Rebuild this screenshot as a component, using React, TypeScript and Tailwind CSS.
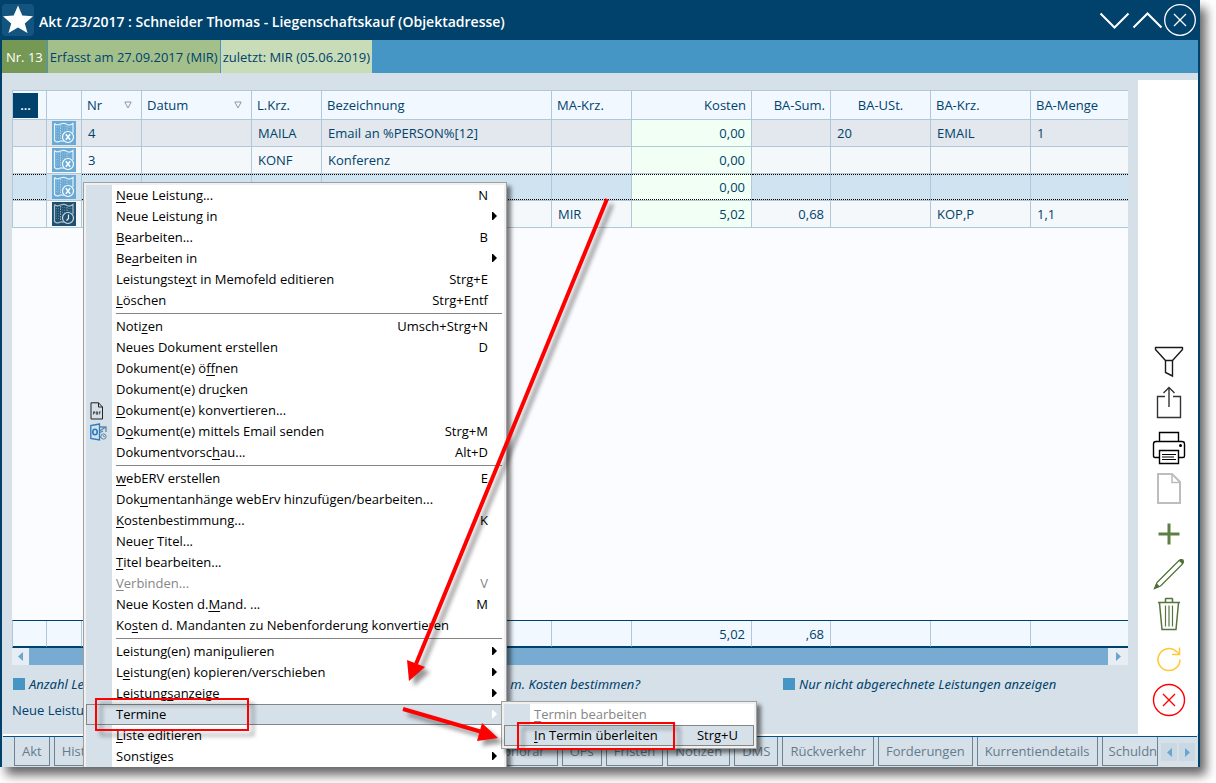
import type { ReactNode } from "react";
import { clsx } from "clsx";

interface MenuEntry {
  label: string;
  // index of the letter that is underlined as access key
  hot?: number;
  keys?: string;
  sub?: boolean;
  disabled?: boolean;
  active?: boolean;
  icon?: ReactNode;
}

interface Row {
  nr: string;
  krz: string;
  text: string;
  ma: string;
  kosten: string;
  sum: string;
  ust: string;
  baKrz: string;
  menge: string;
  bg: string;
  selected?: boolean;
  timed?: boolean;
}

const rows: Row[] = [
  { nr: "4", krz: "MAILA", text: "Email an %PERSON%[12]", ma: "", kosten: "0,00", sum: "", ust: "20", baKrz: "EMAIL", menge: "1", bg: "bg-[#e2e8ee]" },
  { nr: "3", krz: "KONF", text: "Konferenz", ma: "", kosten: "0,00", sum: "", ust: "", baKrz: "", menge: "", bg: "bg-[#f4f8fb]" },
  { nr: "", krz: "", text: "", ma: "", kosten: "0,00", sum: "", ust: "", baKrz: "", menge: "", bg: "bg-[#d0e3f1]", selected: true },
  { nr: "", krz: "", text: "", ma: "MIR", kosten: "5,02", sum: "0,68", ust: "", baKrz: "KOP,P", menge: "1,1", bg: "bg-[#f4f8fb]", timed: true },
];

const PdfIcon = () => (
  <svg width="14" height="18" viewBox="0 0 14 18" fill="none" stroke="#222">
    <path d="M1 .8H8.5L12.5 5V17H1Z" />
    <path d="M8.5 .8V5H12.5" />
    <path d="M3.5 12.500V9.800H4.800V11H3.500M6.300 9.800V12.300H7.500V9.800ZM9.300 12.500V9.800H10.800M9.300 11H10.300" strokeWidth=".7" />
  </svg>
);

const OutlookIcon = () => (
  <svg width="17" height="18" viewBox="0 0 17 18" fill="none" stroke="#2b7bbd" strokeWidth="1.3">
    <path d="M9.5 1L.8 2.5V15.5L9.5 17Z" />
    <ellipse cx="5" cy="9" rx="2.2" ry="2.8" strokeWidth="1.6" />
    <path d="M9.5 4H16V9M9.5 8L16 4M9.5 14H11M10 9.5L13 8" stroke="#5c87aa" />
    <circle cx="13.5" cy="13.5" r="2.6" stroke="#5c87aa" strokeWidth="1" />
    <path d="M13.5 12V13.5H15" stroke="#5c87aa" strokeWidth=".8" />
  </svg>
);

const groups: MenuEntry[][] = [
  [
    { label: "Neue Leistung...", hot: 0, keys: "N" },
    { label: "Neue Leistung in", sub: true },
    { label: "Bearbeiten...", hot: 0, keys: "B" },
    { label: "Bearbeiten in", hot: 2, sub: true },
    { label: "Leistungstext in Memofeld editieren", hot: 11, keys: "Strg+E" },
    { label: "Löschen", hot: 0, keys: "Strg+Entf" },
  ],
  [
    { label: "Notizen", hot: 4, keys: "Umsch+Strg+N" },
    { label: "Neues Dokument erstellen", keys: "D" },
    { label: "Dokument(e) öffnen", hot: 13 },
    { label: "Dokument(e) drucken", hot: 15 },
    { label: "Dokument(e) konvertieren...", hot: 0, icon: <PdfIcon /> },
    { label: "Dokument(e) mittels Email senden", hot: 1, keys: "Strg+M", icon: <OutlookIcon /> },
    { label: "Dokumentvorschau...", hot: 13, keys: "Alt+D" },
  ],
  [
    { label: "webERV erstellen", hot: 0, keys: "E" },
    { label: "Dokumentanhänge webErv hinzufügen/bearbeiten...", hot: 3 },
    { label: "Kostenbestimmung...", hot: 0, keys: "K" },
    { label: "Neuer Titel...", hot: 4 },
    { label: "Titel bearbeiten...", hot: 0 },
    { label: "Verbinden...", hot: 0, keys: "V", disabled: true },
    { label: "Neue Kosten d.Mand. ...", hot: 14, keys: "M" },
    { label: "Kosten d. Mandanten zu Nebenforderung konvertieren", hot: 2 },
  ],
  [
    { label: "Leistung(en) manipulieren", hot: 17, sub: true },
    { label: "Leistung(en) kopieren/verschieben", hot: 1, sub: true },
    { label: "Leistungsanzeige", hot: 8, sub: true },
    { label: "Termine", sub: true, active: true },
    { label: "Liste editieren", hot: 0 },
    { label: "Sonstiges", hot: 6, sub: true },
  ],
];

const submenu: MenuEntry[][] = [
  [
    { label: "Termin bearbeiten", hot: 0, disabled: true },
    { label: "In Termin überleiten", hot: 0, keys: "Strg+U", active: true },
  ],
];

const lateTabs = ["OPs", "Fristen", "Notizen", "DMS", "Rückverkehr", "Forderungen", "Kurrentiendetails"];

function Label({ text, hot }: { text: string; hot?: number }) {
  if (hot === undefined) return <>{text}</>;
  return (
    <>
      {text.slice(0, hot)}
      <span className="underline underline-offset-2">{text[hot]}</span>
      {text.slice(hot + 1)}
    </>
  );
}

function Menu({ entries, className }: { entries: MenuEntry[][]; className: string }) {
  return (
    <div
      role="menu"
      className={clsx(
        "absolute border border-[#a0a0a0] bg-[#f0f0f0] p-0.5 text-black shadow-[4px_4px_4px_rgba(0,0,0,0.5)]",
        className,
      )}
    >
      <div className="bg-[linear-gradient(90deg,#d5e0e9_26px,#fff_26px)]">
        {entries.map((group, g) => (
          <div key={g}>
            {g > 0 && (
              <div role="separator" className="h-[5px] pt-0.5 pr-0.5 pl-[30px]">
                <div className="h-px bg-[#868686]" />
              </div>
            )}
            {group.map((e) => (
              <button
                key={e.label}
                type="button"
                role="menuitem"
                disabled={e.disabled}
                className={clsx(
                  "flex h-[21px] w-full items-center border pr-[6px] pb-0.5 text-left whitespace-nowrap",
                  e.active ? "border-[#868686] bg-[#d5e0e9]" : "border-transparent",
                  e.disabled && "text-[#868686]",
                )}
              >
                <span className="flex w-[29px] shrink-0 pt-0.5 pl-[3px]">{e.icon}</span>
                <span className="flex-1">
                  <Label text={e.label} hot={e.hot} />
                </span>
                <span>{e.keys}</span>
                <span className="flex w-[9px] shrink-0 justify-end">
                  {e.sub && (
                    <svg width="5" height="8" viewBox="0 0 5 8" fill={e.active ? "#fff" : "#000"}>
                      <path d="M0 0H1L5 4L1 8H0Z" />
                    </svg>
                  )}
                </span>
              </button>
            ))}
          </div>
        ))}
      </div>
    </div>
  );
}

function Columns() {
  return (
    <colgroup>
      <col className="w-[34px]" />
      <col className="w-[35px]" />
      <col className="w-[60px]" />
      <col className="w-[110px]" />
      <col className="w-[70px]" />
      <col className="w-[230px]" />
      <col className="w-[80px]" />
      <col className="w-[120px]" />
      <col className="w-[79px]" />
      <col className="w-[100px]" />
      <col className="w-[100px]" />
      <col />
    </colgroup>
  );
}

function Head({ children, align = "text-left", sort }: { children?: ReactNode; align?: string; sort?: boolean }) {
  return (
    <th className={clsx("h-[30px] border-y border-r border-[#b0c8d8] bg-[#f1f8ff] px-[5px] py-0 font-normal last:border-r-0", align)}>
      {sort ? (
        <span className="flex items-center justify-between pr-1">
          {children}
          <svg width="8" height="8" viewBox="0 0 8 8" fill="none" stroke="#8f9ba5">
            <path d="M.8 1H7.2L4 7Z" />
          </svg>
        </span>
      ) : (
        children
      )}
    </th>
  );
}

function Cell({ row, children, right, green }: { row: Row; children?: ReactNode; right?: boolean; green?: boolean }) {
  return (
    <td className={clsx("border-r border-b border-[#b0c8d8] p-0 last:border-r-0", green ? "bg-[#f1fff5]" : row.bg)}>
      <div
        className={clsx(
          "flex h-[26px] items-center border-y px-[6px]",
          right && "justify-end",
          row.selected ? "border-dotted border-black" : "border-transparent",
        )}
      >
        {children}
      </div>
    </td>
  );
}

function MapIcon({ timed }: { timed?: boolean }) {
  return (
    <svg width="24" height="24" viewBox="0 0 24 24" fill="none" className={timed ? "bg-[#21506f]" : "bg-[#6aaad4]"}>
      <path
        d="M2.5 2.5Q5 5 8.500 3Q12 1.500 15 3.500Q18 5 21 2.500V12M2.500 2.500V19.500Q5 22 8.500 20Q10 19.500 11.500 20.500"
        stroke="#e3f0f9"
        strokeWidth="1.2"
        strokeOpacity={timed ? 0.7 : 1}
      />
      <path d="M8.500 4V19M15 5V10" stroke="#e3f0f9" strokeDasharray="1.500 1" strokeOpacity=".6" />
      <path d="M4.500 6V18M6.500 6V18M10.500 5V17M12.500 5V11M17 6V10M19 6V10" stroke="#e3f0f9" strokeDasharray="1 1.500" strokeOpacity=".3" />
      <circle cx="16" cy="16" r="5.500" stroke="#fff" strokeWidth="1.200" fill={timed ? "#21506f" : "#6aaad4"} strokeOpacity={timed ? 0.8 : 1} />
      {timed ? (
        <path d="M16.500 12.500V16.500L14.500 18.500" stroke="#e3f0f9" strokeWidth="1.200" />
      ) : (
        <path d="M13.800 13.300L18.200 18.700M18.200 13.300L13.800 18.700" stroke="#fff" strokeWidth="1.500" />
      )}
    </svg>
  );
}

function Tool({ label, stroke = "#1a1a1a", width = 1.4, children }: { label: string; stroke?: string; width?: number; children: ReactNode }) {
  return (
    <button type="button" aria-label={label} className="h-[42px]">
      <svg width="34" height="42" viewBox="0 0 34 42" fill="none" stroke={stroke} strokeWidth={width}>
        {children}
      </svg>
    </button>
  );
}

function Toolbar() {
  return (
    <div className="mt-[7px] flex w-[60px] shrink-0 flex-col items-center justify-end bg-white pr-px pb-[13px] pl-[3px]">
      <Tool label="Filter">
        <path d="M3.500 4.500H30.500V6.500L20.500 17.500H13.500L3.500 6.500Z" strokeLinejoin="round" />
        <path d="M13.500 17.500V29.500L20.500 33V17.500" />
      </Tool>
      <Tool label="Exportieren" stroke="#333">
        <path d="M13 11.500H5.500V32.500H28.500V11.500H21" />
        <path d="M17 2.500V22M11.500 8L17 2.500L22.500 8" />
      </Tool>
      <Tool label="Drucken" stroke="#000">
        <path d="M7.500 14.500V5.500H26.500V14.500" />
        <path d="M7.500 30.500H3Q1.500 30.500 1.500 29V17Q1.500 14.500 4 14.500H30Q32.500 14.500 32.500 17V29Q32.500 30.500 31 30.500H26.500" />
        <path d="M7.500 23.500H26.500V36.500H7.500Z" />
        <path d="M10 27.500H24M10 30H22M10 32.500H24" strokeWidth="1.200" />
        <circle cx="28.500" cy="18.500" r=".8" fill="#000" />
      </Tool>
      <Tool label="Neues Dokument" stroke="#bdbdbd" width={2}>
        <path d="M6 5H20L28 13V34H6Z" />
        <path d="M20 5V13.500H28" strokeWidth="1.600" />
      </Tool>
      <Tool label="Hinzufügen" stroke="#5f7f42" width={3}>
        <path d="M17 12.500V33.500M6.500 23H27.500" />
      </Tool>
      <Tool label="Bearbeiten" stroke="#4f7237" width={1.2}>
        <path d="M3 35L5 29.500L27 7.500Q29 6 30.500 7.500Q32 9 30.500 11L8.500 33Z" strokeLinejoin="round" />
        <path d="M2.500 35.500L4.500 31L7 33.500ZM27.500 7.500Q29 6 31 7Q32 9 30.500 10.500Z" fill="#4f7237" />
      </Tool>
      <Tool label="Löschen" stroke="#56753c" width={1.5}>
        <path d="M6 7.500H28M13.500 7V4Q13.500 3.500 14 3.500H20Q20.500 3.500 20.500 4V7" />
        <path d="M7.500 8L10 34.500H24L26.500 8" />
        <path d="M13.500 10.500V31.500M17 10.500V31.500M20.500 10.500V31.500" strokeWidth="1.200" />
      </Tool>
      <Tool label="Aktualisieren" stroke="#ffc730" width={1.5}>
        <path d="M28 22.500A11 11 0 1 1 24.500 14.500L27.500 17" />
        <path d="M27.500 10.500V17.500H20" />
      </Tool>
      <Tool label="Schließen" stroke="#ff0000" width={1.4}>
        <circle cx="17" cy="21" r="15.500" />
        <path d="M11 15L23 27M23 15L11 27" />
      </Tool>
    </div>
  );
}

function TitleBar() {
  return (
    <header className="flex h-10 shrink-0 items-center bg-[#00426b] pr-0.5 text-white">
      <svg width="32" height="32" viewBox="0 0 32 32">
        <rect width="32" height="32" rx="4" fill="#14557f" />
        <path d="M16 1.500L20.300 11.500L31 12.200L22.800 19.400L25.500 29L16 23.500L6.500 29L9.200 19.400L1 12.200L11.700 11.500Z" fill="#fff" />
      </svg>
      <h1 className="ml-[5px] flex-1 pt-1 text-sm font-semibold whitespace-nowrap">
        Akt /23/2017 : Schneider Thomas - Liegenschaftskauf (Objektadresse)
      </h1>
      <div className="flex items-center">
        <button type="button" aria-label="Nach unten">
          <svg width="33" height="32" viewBox="0 0 33 32" fill="none" stroke="#fff" strokeWidth="2">
            <path d="M2.500 9.500L16.500 23.500L30.500 9.500" />
          </svg>
        </button>
        <button type="button" aria-label="Nach oben">
          <svg width="33" height="32" viewBox="0 0 33 32" fill="none" stroke="#fff" strokeWidth="2">
            <path d="M2.500 23.500L16.500 9.500L30.500 23.500" />
          </svg>
        </button>
        <button type="button" aria-label="Fenster schließen">
          <svg width="32" height="32" viewBox="0 0 32 32" fill="none" stroke="#fff" strokeWidth="1.300">
            <circle cx="16" cy="16" r="15.300" />
            <path d="M10 10L22 22M22 10L10 22" />
          </svg>
        </button>
      </div>
    </header>
  );
}

function Option({ label, children }: { label?: string; children?: ReactNode }) {
  return (
    <label className="flex items-center gap-1 overflow-hidden font-['Noto_Sans',sans-serif] whitespace-nowrap italic">
      <input type="checkbox" className="size-3 shrink-0 appearance-none bg-[#4595c5]" />
      {label}
      {children}
    </label>
  );
}

function ScrollButton({ left, className }: { left?: boolean; className: string }) {
  return (
    <button type="button" aria-label={left ? "Zurück" : "Weiter"} className={clsx("flex shrink-0 items-center justify-center", className)}>
      <svg width="5" height="9" viewBox="0 0 5 9" fill="#6aa5cf">
        <path d={left ? "M5 0V9L0 4.500Z" : "M0 0V9L5 4.500Z"} />
      </svg>
    </button>
  );
}

const tabClass = "h-[29px] shrink-0 border-x border-b border-[#6b8393] px-[7px] text-[#657b8b]";

function Tabs() {
  return (
    <nav className="mx-px flex h-[33px] shrink-0 border-t-2 border-white">
      <div className="flex min-w-0 flex-1 border-t border-[#005288] pl-[11px]">
        <div className="flex min-w-0 flex-1 gap-1">
          <button type="button" className={tabClass}>Akt</button>
          <div className="flex w-[504px] shrink-0 justify-between">
            <button type="button" className={tabClass}>Hist</button>
            <button type="button" className={clsx(tabClass, "pr-3")}>Honorar</button>
          </div>
          {lateTabs.map((t) => (
            <button key={t} type="button" className={tabClass}>
              {t}
            </button>
          ))}
          <button
            type="button"
            className="h-[29px] min-w-0 flex-1 border-x border-b border-[#6b8393] pl-1.5 text-left whitespace-nowrap text-[#657b8b]"
          >
            Schuldn
          </button>
        </div>
        <div className="flex items-center gap-0.5 pr-0.5 pl-[3px]">
          <ScrollButton left className="h-[18px] w-4 bg-[#cad8e3]" />
          <ScrollButton className="h-[18px] w-4 bg-[#cad8e3]" />
        </div>
      </div>
    </nav>
  );
}

function Annotations() {
  return (
    <svg className="pointer-events-none absolute inset-0 h-full w-full drop-shadow-[5px_5px_2px_rgba(0,0,0,0.4)]" fill="none" stroke="#f00">
      <path d="M605 199L414 664" strokeWidth="4" />
      <path d="M405 660L423 667L407 681Z" fill="#f00" stroke="none" />
      <path d="M401 709L480 732" strokeWidth="4" />
      <path d="M480 723L475 741L496 738Z" fill="#f00" stroke="none" />
      <rect x="94" y="699" width="152" height="31" strokeWidth="2" />
      <rect x="516" y="723" width="156" height="26" strokeWidth="2" />
    </svg>
  );
}

export default function App() {
  return (
    <div className="flex h-screen min-h-[640px] overflow-hidden bg-white pr-4 pb-4 font-['Open_Sans',sans-serif] text-[13px] leading-[18px] text-[#00426b]">
      <div className="relative flex min-w-0 flex-1 flex-col overflow-hidden border-x-2 border-[#00426b] bg-[#d5e0e9] shadow-[6px_8px_10px_rgba(0,0,0,0.6)]">
        <TitleBar />

        <div className="flex h-[33px] shrink-0 gap-px bg-[#4595c5] whitespace-nowrap">
          <span className="flex items-center bg-[#759955] px-1 text-white">Nr. 13</span>
          <span className="flex items-center bg-[#a3c08b] px-0.5">Erfasst am 27.09.2017 (MIR)</span>
          <span className="flex items-center bg-[#c8dcb8] px-0.5">zuletzt: MIR (05.06.2019)</span>
        </div>

        <div className="flex min-h-0 flex-1">
          <main className="flex min-w-0 flex-1 flex-col pt-[17px] pr-2.5 pb-[15px] pl-2.5">
            <div className="flex min-h-0 flex-1 flex-col overflow-hidden bg-[#fbfcff]">
              <table className="w-full table-fixed border-separate border-spacing-0 border-l border-[#b0c8d8]">
                <Columns />
                <thead>
                  <tr>
                    <th className="border-y border-r border-[#b0c8d8] bg-[#f1f8ff] p-0">
                      <button type="button" className="block size-[25px] bg-[#00426b] font-semibold text-white">
                        ...
                      </button>
                    </th>
                    <Head />
                    <Head sort>Nr</Head>
                    <Head sort>Datum</Head>
                    <Head>L.Krz.</Head>
                    <Head>Bezeichnung</Head>
                    <Head>MA-Krz.</Head>
                    <Head align="text-right">Kosten</Head>
                    <Head align="text-right">BA-Sum.</Head>
                    <Head align="text-center">BA-USt.</Head>
                    <Head>BA-Krz.</Head>
                    <Head>BA-Menge</Head>
                  </tr>
                </thead>
                <tbody>
                  {rows.map((row, i) => (
                    <tr key={i}>
                      <Cell row={row} />
                      <td className={clsx("border-r border-b border-[#b0c8d8] p-0", row.bg)}>
                        <div className="flex justify-center">
                          <MapIcon timed={row.timed} />
                        </div>
                      </td>
                      <Cell row={row}>{row.nr}</Cell>
                      <Cell row={row} />
                      <Cell row={row}>{row.krz}</Cell>
                      <Cell row={row}>{row.text}</Cell>
                      <Cell row={row}>{row.ma}</Cell>
                      <Cell row={row} right green>{row.kosten}</Cell>
                      <Cell row={row} right>{row.sum}</Cell>
                      <Cell row={row}>{row.ust}</Cell>
                      <Cell row={row}>{row.baKrz}</Cell>
                      <Cell row={row}>{row.menge}</Cell>
                    </tr>
                  ))}
                </tbody>
              </table>
            </div>

            <table className="w-full table-fixed border-separate border-spacing-0 border-y border-l border-y-[#00426b] border-l-[#b0c8d8] bg-[#f1f8ff]">
              <Columns />
              <tbody>
                <tr>
                  {["", "", "", "", "", "", "", "5,02", ",68", "", "", ""].map((v, i) => (
                    <td key={i} className="h-[26px] border-r border-b border-r-[#b0c8d8] border-b-[#00426b] px-[6px] py-0 text-right last:border-r-0">
                      {v}
                    </td>
                  ))}
                </tr>
              </tbody>
            </table>

            <div className="flex h-[17px] shrink-0 bg-[#78abd1]">
              <ScrollButton left className="w-[17px] bg-[#e8edf3]" />
              <div className="flex-1" />
              <ScrollButton className="w-5 bg-[#e8edf3]" />
            </div>

            <div className="mt-2.5 ml-px grid shrink-0 grid-cols-[385px_385px_1fr]">
              <Option label="Anzahl Le" />
              <Option>
                <span className="w-[226px] text-right">m. Kosten bestimmen?</span>
              </Option>
              <Option label="Nur nicht abgerechnete Leistungen anzeigen" />
            </div>
            <p className="mt-2">Neue Leistu</p>
          </main>
          <Toolbar />
        </div>

        <Tabs />

        <Menu entries={groups} className="top-[182px] left-[81px] w-[424px]" />
        <Menu entries={submenu} className="top-[701px] left-[499px] w-[256px]" />
        <Annotations />
      </div>
    </div>
  );
}
